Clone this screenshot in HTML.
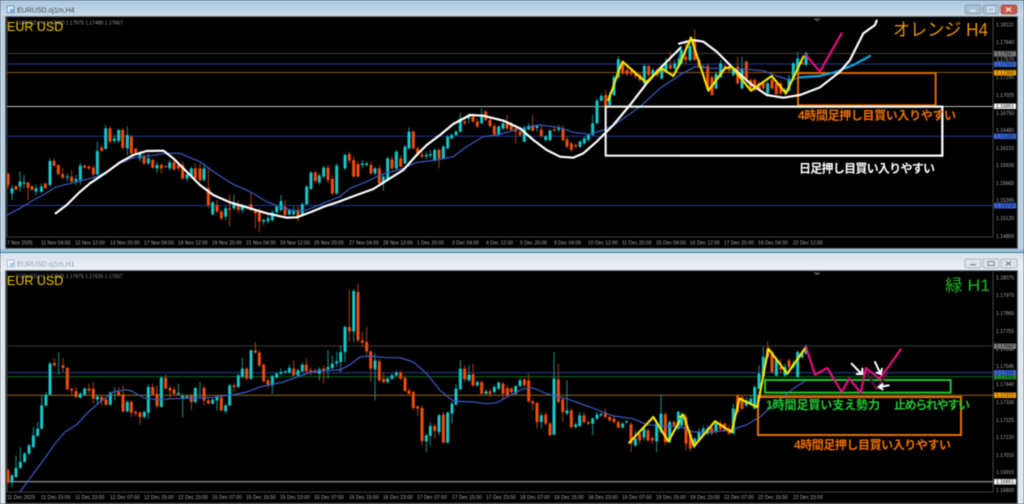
<!DOCTYPE html>
<html lang="ja"><head><meta charset="utf-8"><title>EURUSD</title>
<style>
html,body{margin:0;padding:0;background:#000;width:1024px;height:504px;overflow:hidden}
svg{display:block;filter:blur(.45px)}
text{font-family:"Liberation Sans","Noto Sans CJK JP",sans-serif}
.ax text{font-size:5px;fill:#a8a8a8}
.jp{font-weight:700}
.wt{fill:none;stroke:#1c8f90;stroke-width:3}
.wr{fill:none;stroke:#a8400f;stroke-width:3}
.bt{fill:none;stroke:#16c6c8;stroke-width:9}
.br{fill:none;stroke:#f04c0c;stroke-width:9}
.ln{fill:none;stroke-linejoin:round;stroke-linecap:round}
.w{stroke:#fff;stroke-width:6.5}
.b{stroke:#3a5cc4;stroke-width:3.6}
.y{stroke:#f6e400;stroke-width:6.5}
.p{stroke:#e4107c;stroke-width:6.5}
.c{stroke:#0ea4e2;stroke-width:6.5}
</style></head><body>
<svg xmlns="http://www.w3.org/2000/svg" width="1024" height="504" viewBox="0 0 1024 504">
<defs>
<linearGradient id="t1" x1="0" y1="0" x2="0" y2="1"><stop offset="0" stop-color="#a9c5de"/><stop offset="1" stop-color="#c9dae8"/></linearGradient>
<linearGradient id="t2" x1="0" y1="0" x2="0" y2="1"><stop offset="0" stop-color="#d9e2ea"/><stop offset="1" stop-color="#eef2f6"/></linearGradient>
<clipPath id="c1"><rect x="7" y="18" width="986" height="219"/></clipPath>
<clipPath id="c2"><rect x="7" y="272" width="986" height="220"/></clipPath>
</defs>
<!-- window frames -->
<rect width="1024" height="252" fill="#bcd3e6"/>
<rect x="0" y="0" width="1024" height="16" fill="url(#t1)"/>
<rect x="0" y="249" width="1024" height="3" fill="#a3c3d9"/>
<rect x="0" y="252" width="1024" height="1.5" fill="#2e7f9c"/>
<rect x="0" y="253" width="1024" height="251" fill="#dfe7ee"/>
<rect x="0" y="254" width="1024" height="17" fill="url(#t2)"/>
<rect x="5" y="16" width="1013" height="233" fill="#6d7478"/>
<rect x="5" y="270" width="1013" height="234" fill="#7b8186"/>
<rect x="6" y="17" width="1011" height="231" fill="#000"/>
<rect x="6" y="271" width="1011" height="232" fill="#000"/>
<!-- title icons -->
<rect x="7" y="6" width="7" height="7" fill="#dbe8f3" stroke="#6f9bc6" stroke-width="1"/>
<rect x="10" y="9" width="5" height="4" fill="#7ea9d2"/>
<rect x="7" y="260" width="7" height="7" fill="#eef3f8" stroke="#a7c0da" stroke-width="1"/>
<rect x="10" y="263" width="5" height="4" fill="#b2c9df"/>
<text x="17" y="12.5" font-size="7" fill="#3a4a58">EURUSD.oj1m,H4</text>
<text x="17" y="266.5" font-size="7" fill="#93a1ae">EURUSD.oj1m,H1</text>
<!-- window buttons -->
<rect x="965" y="5" width="16" height="9" rx="2" fill="#a8bfd3" stroke="#7f96aa" stroke-width=".7"/>
<rect x="983" y="5" width="16" height="9" rx="2" fill="#a8bfd3" stroke="#7f96aa" stroke-width=".7"/>
<rect x="1001" y="5" width="16" height="9" rx="2" fill="#c8584a" stroke="#9a4a42" stroke-width=".7"/>
<rect x="970" y="10" width="6" height="1.3" fill="#f0f4f8"/>
<rect x="988" y="7.5" width="6" height="4" fill="none" stroke="#eef3f8" stroke-width="1"/>
<path d="M1006 7.5l5 4M1011 7.5l-5 4" stroke="#f4e8e6" stroke-width="1.3"/>
<rect x="965" y="259" width="16" height="9" rx="1.5" fill="#dde3e9" stroke="#a2aab2" stroke-width=".8"/>
<rect x="983" y="259" width="16" height="9" rx="1.5" fill="#dde3e9" stroke="#a2aab2" stroke-width=".8"/>
<rect x="1001" y="259" width="16" height="9" rx="1.5" fill="#dde3e9" stroke="#a2aab2" stroke-width=".8"/>
<rect x="970" y="264" width="6" height="1.3" fill="#7d858d"/>
<rect x="988" y="261.5" width="6" height="4" fill="none" stroke="#7d858d" stroke-width="1"/>
<path d="M1006 261.5l5 4M1011 261.5l-5 4" stroke="#7d858d" stroke-width="1.2"/>

<!-- TOP CHART -->
<path d="M7 17.5V237H993V17.5" fill="none" stroke="#555" stroke-width=".8"/>
<g stroke-width="1" fill="none">
<path d="M7 53.5H993" stroke="#3a3a3a"/>
<path d="M7 64H993" stroke="#1d3a90"/>
<path d="M7 72.5H993" stroke="#8c5a0c"/>
<path d="M7 106.5H993" stroke="#b8b8b8"/>
<path d="M7 136.2H993" stroke="#1d3a90"/>
<path d="M7 205.5H993" stroke="#1d3a90"/>
</g>
<path d="M813 18.5l4 3l4-3z" fill="#555"/>
<g clip-path="url(#c1)">
<g transform="translate(0 125) scale(.33333)">
<path class="wr" d="M24 145V190M84 172V225M162 100V125M175 118V150M188 130V162M215 135V175M254 118V132M267 120V135M280 120V155M305 60V80M330 5V55M368 10V75M394 30V90M432 85V120M458 100V132M484 115V145M522 105V138M535 110V140M548 110V165M586 115V165M600 115V170M625 130V250M651 225V265M664 255V285M689 208V305M715 225V265M753 205V260M766 250V310M778 250V322M855 225V275M894 245V290M946 138V175M984 120V175M997 150V210"/>
<path class="wt" d="M36 180V225M60 140V200M72 150V190M108 180V210M124 175V205M150 100V185M202 145V170M228 150V180M241 113V180M292 50V150M317 0V72M343 30V55M356 12V55M382 5V90M420 78V110M445 85V120M471 110V145M509 105V135M561 140V170M574 125V160M612 115V170M638 228V272M677 245V285M702 208V255M727 235V265M791 280V300M804 270V295M817 255V290M830 240V268M843 210V260M868 250V272M881 245V272M907 232V272M920 180V240M933 138V195M958 145V180M971 122V160M1010 115V210"/>
<path class="br" d="M24 145V180M48 183V195M84 172V188M96 183V195M136 175V190M162 108V122M175 120V147M188 147V158M215 155V170M254 122V128M267 125V130M280 128V148M305 68V78M330 10V50M368 15V68M394 35V85M407 70V85M432 95V115M458 105V128M484 120V130M497 123V127M522 112V133M535 120V130M548 120V160M586 130V160M600 130V165M625 190V240M651 240V260M664 260V280M689 250V254M715 240V255M753 238V255M766 258V265M778 262V290M855 245V270M894 255V280M946 142V168M984 128V165M997 162V205"/>
<path class="bt" d="M36 190V205M60 170V185M72 172V176M108 190V200M124 185V200M150 108V180M202 155V158M228 162V168M241 122V165M292 78V148M317 10V72M343 40V48M356 15V48M382 30V70M420 85V100M445 100V115M471 120V130M509 112V130M561 148V160M574 130V155M612 130V165M638 232V268M677 250V275M702 235V250M727 240V255M791 285V290M804 280V288M817 262V285M830 245V262M843 228V255M868 255V268M881 255V268M907 238V268M920 185V238M933 143V192M958 152V172M971 128V155M1010 122V205"/>
<polyline class="ln b" points="22,270 60,250 100,225 130,210 165,187 200,178 240,168 290,155 320,140 360,115 400,98 450,92 500,85 540,85 570,98 600,110 640,140 700,178 750,200 800,230 840,245 880,258 920,255 970,235 1023,213"/>
<polyline class="ln w" points="167,265 200,240 235,205 270,175 315,145 360,112 400,90 440,78 490,77 520,100 560,140 600,180 640,210 690,232 750,250 800,265 860,278 890,277 930,262 980,242 1023,228"/>
</g>
<g transform="translate(340 0) scale(.33333)">
<path class="wr" d="M28 455V490M41 470V532M54 485V532M93 485V525M118 495V552M156 470V510M182 465V502M220 390V448M233 440V470M246 455V475M297 445V505M374 355V375M399 340V368M412 355V385M437 330V365M450 350V382M463 370V405M501 345V390M514 365V395M527 378V430M540 390V410M578 345V395M604 378V412M643 378V395M669 375V425M681 410V445M694 425V455M707 430V445M797 270V322M848 185V225M861 200V228M874 205V228M887 212V235M900 220V245M926 195V232M952 205V232M991 155V210"/>
<path class="wt" d="M15 460V510M67 480V505M80 485V500M105 500V525M130 525V572M143 470V542M169 450V510M195 435V492M207 382V448M259 455V478M271 450V475M284 445V485M310 435V478M323 405V448M335 400V418M348 390V410M361 337V398M386 340V370M425 325V372M476 375V410M489 365V390M553 378V428M566 370V392M591 375V395M617 405V425M630 388V425M656 375V395M720 420V445M733 410V435M745 400V425M758 345V408M771 295V372M784 280V305M809 275V320M822 225V288M835 168V235M913 192V255M939 205V235M965 195V240M978 175V212M1004 180V210M1017 165V205"/>
<path class="br" d="M28 462V482M41 480V530M54 492V530M93 495V520M118 505V550M156 478V505M182 475V500M220 395V445M233 445V465M246 465V470M297 450V475M374 365V370M399 350V365M412 365V380M437 335V360M450 360V378M463 378V403M501 370V385M514 375V390M527 385V395M540 395V405M578 378V392M604 388V408M643 388V392M669 385V420M681 418V440M694 430V450M707 435V440M797 285V320M848 190V220M861 210V222M874 212V222M887 220V230M900 225V240M926 198V225M952 210V225M991 195V205"/>
<path class="bt" d="M15 465V505M67 490V495M80 490V495M105 505V520M130 530V550M143 475V540M169 455V505M195 440V490M207 395V445M259 465V470M271 462V466M284 450V480M310 440V475M323 410V445M335 405V415M348 395V405M361 355V395M386 350V356M425 345V370M476 380V405M489 370V385M553 385V425M566 378V388M591 378V384M617 410V420M630 392V420M656 385V390M720 425V440M733 415V430M745 405V420M758 370V405M771 302V370M784 288V302M809 285V315M822 232V285M835 178V232M913 198V250M939 210V230M965 200V235M978 190V210M1004 190V205M1017 175V200"/>
<polyline class="ln b" points="-3,592 30,565 80,545 120,525 190,505 230,487 290,480 340,470 380,440 430,410 470,405 520,392 560,380 600,375 660,383 700,397 750,403 790,390 830,370 900,320 960,265 1023,223"/>
<rect x="797" y="320" width="1010" height="147" fill="none" stroke="#fff" stroke-width="6"/>
<polyline class="ln w" points="-3,605 50,585 100,567 150,535 190,510 230,465 260,435 300,405 340,372 390,345 430,347 490,362 540,385 580,420 620,450 660,470 700,473 730,460 770,425 820,375 870,315 920,250 960,205 1023,142"/>
<polyline class="ln y" points="805,300 820,260 835,215 848,185 918,247 965,205 1000,228 1020,190"/>
</g>
<g transform="translate(680 0) scale(.33333)">
<path class="wr" d="M17 120V195M44 88V182M57 175V205M83 190V268M96 225V288M135 195V205M148 195V218M173 170V255M199 180V245M212 235V270M224 235V275M237 245V275M250 245V270M276 235V270M289 245V285M302 245V285M366 185V195"/>
<path class="wt" d="M4 140V195M30 110V185M70 195V205M108 215V270M122 180V235M160 200V230M186 170V268M263 245V283M315 265V285M327 225V275M340 185V242M353 155V218M378 155V198"/>
<path class="br" d="M17 170V180M44 120V180M57 180V200M83 198V265M96 232V285M135 198V203M148 200V212M173 200V250M199 185V240M212 240V265M224 240V270M237 250V270M250 250V265M276 240V265M289 250V282M302 250V280M366 188V192"/>
<path class="bt" d="M4 150V190M30 138V180M70 200V204M108 222V265M122 190V232M160 205V225M186 205V265M263 250V280M315 268V272M327 235V272M340 190V240M353 175V215M378 160V195"/>
<polyline class="ln b" points="-3,226 45,200 90,205 130,205 200,208 250,212 290,228 330,240 370,232"/>
<rect x="354" y="219" width="413" height="97" fill="none" stroke="#dc6a00" stroke-width="6"/>
<polyline class="ln c" points="360,232 420,228 470,215 520,195 570,168"/>
<polyline class="ln w" points="-3,131 40,120 70,125 110,155 160,205 210,250 260,285 310,293 360,285 420,262 480,215 510,180 530,140 550,100 585,75 590,62"/>
<polyline class="ln y" points="0,190 33,113 85,272 135,205 155,200 213,272 275,228 318,280 370,170"/>
<polyline class="ln p" points="378,165 420,215 445,170 485,100"/>
<path d="M-1 320H787V467H-1" fill="none" stroke="#fff" stroke-width="6"/>
</g>
</g>
<text x="16" y="24.5" font-size="5" fill="#9a9a9a">EURUSD,H4  1.17480 1.17675 1.17480 1.17667</text>
<text x="7" y="31" font-size="12.5" fill="#f0c400">EUR USD</text>
<text x="893" y="36" font-size="18" fill="#e89400" textLength="95" lengthAdjust="spacingAndGlyphs">オレンジ H4</text>
<text class="jp" x="798" y="119.5" font-size="12" fill="#f07000" textLength="158" lengthAdjust="spacing">4時間足押し目買い入りやすい</text>
<text class="jp" x="799" y="172.5" font-size="12" fill="#fff" textLength="136" lengthAdjust="spacing">日足押し目買い入りやすい</text>
<g class="ax">
<text x="996" y="26.5">1.18110</text><text x="996" y="44">1.17840</text><text x="996" y="61">1.17570</text><text x="996" y="79">1.17295</text><text x="996" y="97">1.17025</text><text x="996" y="115">1.16750</text><text x="996" y="132">1.16480</text><text x="996" y="150">1.16210</text><text x="996" y="167">1.15935</text><text x="996" y="185">1.15665</text><text x="996" y="202">1.15395</text><text x="996" y="220">1.15120</text><text x="996" y="238">1.14850</text>
<text x="7" y="244.5">7 Nov 2025</text><text x="41" y="244.5">11 Nov 04:00</text><text x="75" y="244.5">12 Nov 12:00</text><text x="110" y="244.5">13 Nov 20:00</text><text x="144" y="244.5">17 Nov 04:00</text><text x="178" y="244.5">18 Nov 12:00</text><text x="212" y="244.5">19 Nov 20:00</text><text x="246" y="244.5">21 Nov 04:00</text><text x="280" y="244.5">24 Nov 12:00</text><text x="314" y="244.5">25 Nov 20:00</text><text x="349" y="244.5">27 Nov 04:00</text><text x="383" y="244.5">28 Nov 12:00</text><text x="417" y="244.5">1 Dec 20:00</text><text x="452" y="244.5">3 Dec 04:00</text><text x="486" y="244.5">4 Dec 12:00</text><text x="520" y="244.5">5 Dec 20:00</text><text x="554" y="244.5">9 Dec 04:00</text><text x="588" y="244.5">10 Dec 12:00</text><text x="622" y="244.5">11 Dec 20:00</text><text x="656" y="244.5">15 Dec 04:00</text><text x="690" y="244.5">16 Dec 12:00</text><text x="724" y="244.5">17 Dec 20:00</text><text x="758" y="244.5">19 Dec 04:00</text><text x="793" y="244.5">22 Dec 12:00</text>
</g>
<rect x="994" y="51" width="22" height="5.5" fill="#7a7a7a"/><text x="996" y="55.5" font-size="5" fill="#111">1.17667</text>
<rect x="994" y="61.5" width="22" height="5.5" fill="#3a66d8"/><text x="996" y="66" font-size="5" fill="#0a1a50">1.17506</text>
<rect x="994" y="70" width="22" height="5.5" fill="#f0a000"/><text x="996" y="74.5" font-size="5" fill="#402800">1.17350</text>
<rect x="994" y="103.5" width="22" height="5.5" fill="#f2f2f2"/><text x="996" y="108" font-size="5" fill="#222">1.16851</text>
<rect x="994" y="133.5" width="22" height="5.5" fill="#3a66d8"/><text x="996" y="138" font-size="5" fill="#0a1a50">1.16388</text>
<rect x="994" y="203" width="22" height="5.5" fill="#3a66d8"/><text x="996" y="207.5" font-size="5" fill="#0a1a50">1.15218</text>

<!-- BOTTOM CHART -->
<path d="M7 271.5V492H993V271.5" fill="none" stroke="#555" stroke-width=".8"/>
<g fill="none">
<path d="M7 346H993" stroke="#2a2a2a" stroke-width="1.4"/>
<path d="M7 372.7H993" stroke="#1c2c70" stroke-width="1.4"/>
<path d="M7 376.7H993" stroke="#0f6a10" stroke-width="1"/>
<path d="M7 395.3H993" stroke="#946c20" stroke-width="1"/>
<path d="M7 481.7H993" stroke="#8a8a8a" stroke-width="1.4"/>
</g>
<path d="M813 272.5l4 3l4-3z" fill="#555"/>
<g clip-path="url(#c2)">
<g transform="translate(0 252) scale(.33333)">
<path class="wr" d="M24 650V695M163 318V345M189 318V360M202 345V415M215 408V432M228 405V438M267 395V425M280 390V455M305 430V460M318 435V462M356 405V435M369 400V482M394 445V495M407 475V492M420 478V518M458 395V432M471 400V470M497 368V412M510 400V440M522 405V430M574 425V475M612 400V460M625 440V458M664 430V478M702 395V420M740 345V385M766 270V305M778 295V345M791 335V392M804 380V410M881 325V372M919 320V362M932 345V370M945 350V365M971 340V395"/>
<path class="wt" d="M36 665V705M48 610V678M61 585V650M74 600V632M87 575V610M100 525V590M113 510V555M125 430V532M138 420V465M150 330V430M176 300V368M241 420V440M254 405V432M292 428V455M331 418V462M344 405V445M382 445V482M433 475V500M445 397V500M484 372V467M535 395V430M548 425V497M561 430V440M586 405V455M600 390V440M638 440V458M651 430V475M677 455V485M689 395V462M715 365V408M727 318V378M753 292V385M817 368V425M830 360V380M843 350V368M856 355V365M868 338V365M894 350V375M907 332V362M958 345V385M984 295V380M997 310V352M1010 300V345"/>
<path class="br" d="M24 655V690M163 333V340M189 340V348M202 348V412M215 410V416M228 417V435M267 410V416M280 410V440M305 435V447M318 443V458M356 420V430M369 427V478M394 450V482M407 480V485M420 482V495M458 405V428M471 425V462M497 378V410M510 408V415M522 413V425M574 430V450M612 408V445M625 445V455M664 437V475M702 400V405M740 350V380M766 295V302M778 302V340M791 338V388M804 385V398M881 350V370M919 338V358M932 355V360M945 357V361M971 350V358"/>
<path class="bt" d="M36 670V690M48 648V675M61 630V648M74 605V630M87 580V605M100 550V585M113 530V552M125 460V530M138 428V460M150 335V428M241 425V437M254 410V428M292 433V443M331 422V458M382 450V478M433 480V495M445 405V482M484 377V465M535 423V427M548 432V440M561 432V436M586 408V450M638 443V455M651 435V445M677 460V478M689 400V460M715 370V405M727 350V375M753 295V380M817 372V400M830 365V377M843 360V365M856 358V362M868 348V362M894 355V370M907 338V358M958 352V365M984 345V352M997 335V348M1010 328V334"/>
<polyline class="ln b" points="60,720 100,665 130,625 165,575 195,540 230,518 265,480 300,450 340,420 375,413 395,417 430,437 470,443 520,440 580,438 640,436 700,428 740,420 780,405 850,390 900,372 940,358 1023,353"/>
</g>
<g transform="translate(340 252) scale(.33333)">
<path class="wr" d="M28 112V270M54 95V272M67 238V285M80 225V310M92 295V390M118 320V390M131 360V395M182 355V385M195 370V420M207 410V430M220 415V475M233 460V490M246 460V580M284 515V560M310 480V575M374 340V390M399 335V405M425 385V430M450 410V435M489 390V440M502 400V435M514 405V425M553 378V405M566 365V452M578 442V475M591 450V530M617 480V520M630 510V552M655 335V455M668 435V510M694 470V530M732 480V515M745 505V520M796 470V500M809 490V510M822 495V515M835 505V530M873 510V600M899 540V575M924 530V570M937 550V575M976 480V580M1002 505V525"/>
<path class="wt" d="M2 280V360M15 220V330M41 110V270M105 305V445M143 375V395M156 365V385M169 355V375M259 545V600M271 510V580M297 485V550M323 478V575M336 450V515M348 395V460M361 325V415M387 340V390M412 385V405M438 412V430M463 398V425M476 388V415M527 400V430M540 378V405M604 482V530M642 300V550M681 385V490M707 510V530M719 480V525M758 495V550M771 480V505M783 482V495M848 510V530M860 505V515M886 535V585M912 525V565M950 510V600M963 428V545M989 505V575M1015 475V535"/>
<path class="br" d="M28 225V238M54 120V265M67 265V272M80 270V298M92 298V350M118 328V385M131 380V390M182 362V380M195 378V417M207 416V425M220 420V468M233 463V470M246 468V567M284 522V537M310 488V572M374 350V382M399 367V400M425 390V425M450 418V425M489 395V425M502 408V430M514 410V420M553 382V400M566 385V448M578 448V455M591 453V510M617 488V515M630 515V550M655 382V450M668 442V480M694 475V525M732 490V510M745 510V515M796 483V495M809 495V505M822 500V510M835 510V527M873 517V575M899 545V565M924 535V565M937 558V565M976 487V570M1002 510V520"/>
<path class="bt" d="M2 300V330M15 225V300M41 117V238M105 325V352M143 380V390M156 370V380M169 362V370M259 550V568M271 522V552M297 490V540M323 482V572M336 455V485M348 410V457M361 350V412M387 368V385M412 390V400M438 418V425M463 405V420M476 392V410M527 402V425M540 385V402M604 490V510M642 380V548M681 475V485M707 517V525M719 490V522M758 500V515M771 488V500M783 486V490M848 515V527M860 508V512M886 560V580M912 530V557M950 515V568M963 485V540M989 510V570M1015 480V530"/>
<polyline class="ln b" points="-3,355 30,338 60,315 90,312 140,317 180,317 220,330 260,365 300,415 340,447 400,450 440,455 470,452 510,430 550,410 580,408 620,425 680,440 750,465 820,492 880,500 920,518 1023,525"/>
<polyline class="ln y" points="868,572 940,495 985,568 1020,505"/>
</g>
<g transform="translate(680 252) scale(.33333)">
<path class="wr" d="M18 485V595M31 535V598M95 515V550M121 505V540M134 510V540M147 520V550M173 425V485M186 430V475M263 268V320M276 295V365M302 320V365M327 320V350"/>
<path class="wt" d="M5 480V530M44 555V590M57 530V570M70 520V555M83 520V550M108 505V545M160 455V548M199 435V465M212 430V460M224 400V472M237 340V412M250 285V375M289 315V375M315 335V375M340 325V350M353 295V378M366 295V320M378 278V308"/>
<path class="br" d="M18 495V575M31 545V590M95 528V545M121 515V532M134 515V535M147 530V545M173 430V480M186 435V470M263 290V315M276 300V360M302 345V352M327 325V345"/>
<path class="bt" d="M5 490V520M44 560V580M57 540V565M70 530V550M83 530V545M108 515V540M160 470V545M199 445V460M212 440V455M224 405V470M237 365V410M250 315V372M289 325V370M315 345V370M340 335V345M353 300V375M366 302V316M378 285V305"/>
<polyline class="ln b" points="-3,522 40,540 90,540 150,535 200,518 240,495 290,450 340,410 378,385"/>
<rect x="234" y="435" width="609" height="114" fill="none" stroke="#e07000" stroke-width="6"/>
<rect x="255" y="384" width="557" height="38" fill="none" stroke="#22c42e" stroke-width="6"/>
<polyline class="ln" stroke="#6a1040" stroke-width="6" points="558,358 590,412 620,365"/>
<polyline class="ln y" points="0,495 10,488 42,583 105,508 155,540 178,440 232,465 265,290 322,365 378,285"/>
<polyline class="ln p" points="378,285 405,368 442,348 485,420 508,380 542,422 558,348 598,380 625,345 662,292"/>
<g fill="none" stroke="#fff" stroke-width="6" stroke-linecap="round">
<path d="M515 335L545 366M530 366H547V350"/>
<path d="M585 330L601 364M590 362L602 366L606 350"/>
<path d="M626 400L598 405M608 396L596 405L608 412"/>
</g>
</g>
</g>
<text x="16" y="278" font-size="5" fill="#8a8a8a">EURUSD,H1  1.17635 1.17675 1.17626 1.17667</text>
<text x="7" y="285" font-size="12.5" fill="#f0c400">EUR USD</text>
<text x="945" y="291" font-size="16.5" fill="#22b826" textLength="45" lengthAdjust="spacingAndGlyphs">緑 H1</text>
<text class="jp" x="766" y="409" font-size="12" fill="#22c832" textLength="114" lengthAdjust="spacing">1時間足買い支え勢力</text>
<text class="jp" x="894" y="409" font-size="12" fill="#22c832" textLength="76" lengthAdjust="spacing">止められやすい</text>
<text class="jp" x="794" y="449" font-size="12" fill="#f07000" textLength="157" lengthAdjust="spacing">4時間足押し目買い入りやすい</text>
<g class="ax">
<text x="996" y="279.5">1.18075</text><text x="996" y="297">1.17970</text><text x="996" y="315">1.17865</text><text x="996" y="333">1.17755</text><text x="996" y="351">1.17650</text><text x="996" y="368">1.17545</text><text x="996" y="386">1.17440</text><text x="996" y="404">1.17330</text><text x="996" y="422">1.17225</text><text x="996" y="439">1.17120</text><text x="996" y="457">1.17015</text><text x="996" y="474">1.16910</text><text x="996" y="492">1.16800</text>
<text x="7" y="499">11 Dec 2025</text><text x="41" y="499">11 Dec 15:00</text><text x="75" y="499">11 Dec 23:00</text><text x="110" y="499">12 Dec 07:00</text><text x="144" y="499">12 Dec 15:00</text><text x="178" y="499">12 Dec 23:00</text><text x="212" y="499">15 Dec 07:00</text><text x="246" y="499">15 Dec 15:00</text><text x="280" y="499">15 Dec 23:00</text><text x="314" y="499">16 Dec 07:00</text><text x="349" y="499">16 Dec 15:00</text><text x="383" y="499">16 Dec 23:00</text><text x="417" y="499">17 Dec 07:00</text><text x="452" y="499">17 Dec 15:00</text><text x="486" y="499">17 Dec 23:00</text><text x="520" y="499">18 Dec 07:00</text><text x="554" y="499">18 Dec 15:00</text><text x="588" y="499">18 Dec 23:00</text><text x="622" y="499">19 Dec 07:00</text><text x="656" y="499">19 Dec 15:00</text><text x="690" y="499">19 Dec 23:00</text><text x="724" y="499">22 Dec 07:00</text><text x="758" y="499">22 Dec 15:00</text><text x="793" y="499">22 Dec 23:00</text>
</g>
<rect x="994" y="343.5" width="22" height="5.5" fill="#7a7a7a"/><text x="996" y="348" font-size="5" fill="#111">1.17667</text>
<rect x="994" y="370" width="22" height="5.5" fill="#3a66d8"/><text x="996" y="374.5" font-size="5" fill="#0a1a50">1.17506</text>
<rect x="994" y="375" width="22" height="4.5" fill="#1e8a26"/><text x="996" y="379" font-size="5" fill="#062a08">1.17484</text>
<rect x="994" y="392.5" width="22" height="5.5" fill="#f0a000"/><text x="996" y="397" font-size="5" fill="#402800">1.17370</text>
<rect x="994" y="479" width="22" height="5.5" fill="#f2f2f2"/><text x="996" y="483.5" font-size="5" fill="#222">1.16851</text>
</svg>
</body></html>
